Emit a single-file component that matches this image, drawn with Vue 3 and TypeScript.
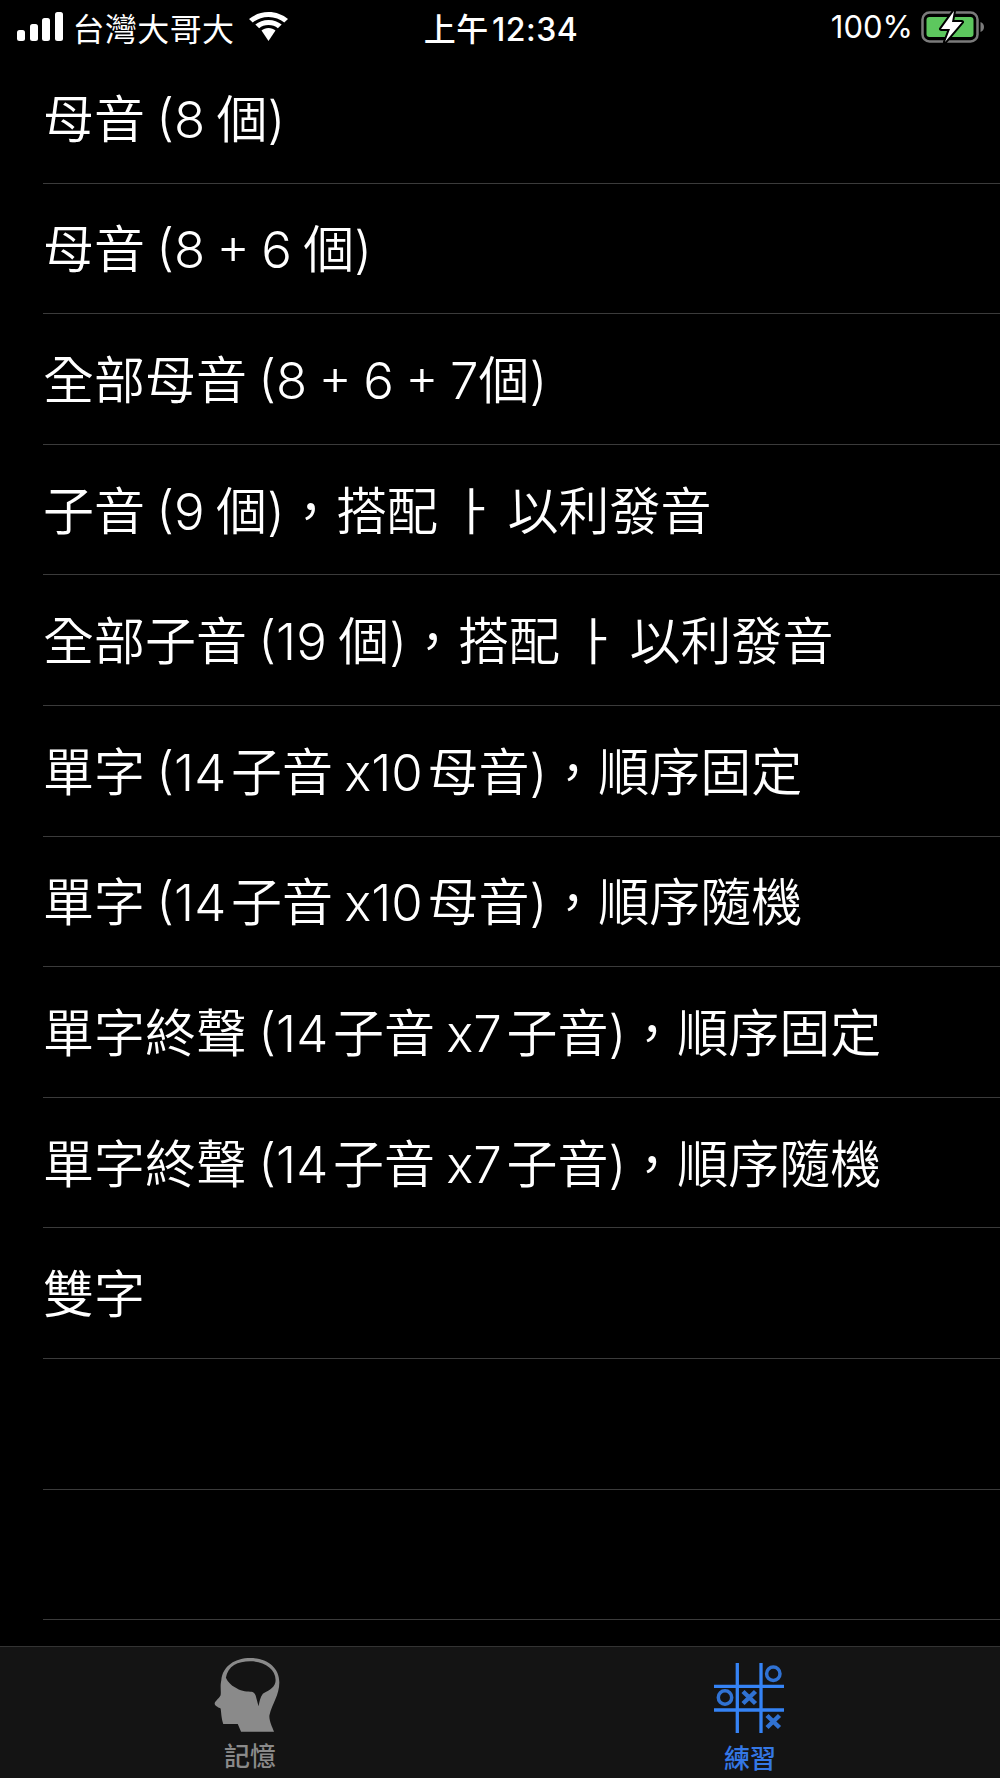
<template>
  <div class="screen">
    <header class="status">
      <div class="status-left">
        <span class="signal"><i></i><i></i><i></i><i></i></span>
        <span class="carrier">台灣大哥大</span>
        <svg class="wifi" viewBox="2.700 0.500 34.600 29" preserveAspectRatio="none" aria-hidden="true">
          <path d="M20 5.500c5.400 0 10.300 2.100 14 5.500l3.300-3.500C32.700 3.200 26.700.5 20 .5S7.300 3.200 2.700 7.500L6 11c3.700-3.400 8.600-5.500 14-5.500z" />
          <path d="M20 13.500c3.200 0 6.100 1.200 8.300 3.200l3.400-3.600C28.600 10.200 24.500 8.500 20 8.500s-8.600 1.700-11.700 4.600l3.400 3.600c2.200-2 5.100-3.200 8.300-3.200z" />
          <path d="M20 16.500c-2.400 0-4.600.9-6.200 2.400L20 29.500l6.200-10.600c-1.600-1.500-3.800-2.400-6.200-2.400z" />
        </svg>
      </div>
      <div class="status-time">上午&#x200A;12:34</div>
      <div class="status-right">
        <span class="percent">100%</span>
        <svg class="battery" viewBox="0 0 64 32" aria-hidden="true">
          <rect x="1.500" y="1.500" width="55" height="29" rx="7" fill="none" stroke="#7b7b7b" stroke-width="2.500" />
          <rect x="5.500" y="6" width="47" height="20" rx="3" fill="#5dc75e" />
          <path d="M59.500 11v10c2-.5 3.500-2.500 3.500-5s-1.500-4.500-3.500-5z" fill="#7b7b7b" />
          <path d="M33 0 20 18h9l-5 13 17-20H31z" fill="#fff" stroke="#000" stroke-width="4" stroke-linejoin="round" paint-order="stroke" />
        </svg>
      </div>
    </header>

    <main class="list">
      <div v-for="(row, i) in rows" :key="i" class="row">
        <span class="row-text">{{ row }}</span>
      </div>
    </main>

    <nav class="tabs">
      <div class="tab">
        <svg class="tab-icon head" viewBox="190 110 200 228" aria-hidden="true">
          <path fill-rule="evenodd" d="M300 112C350 112 388 140 388 185C388 225 366 250 358 285C356 300 366 320 372 335H272L262 312H218C212 295 212 275 210 265C205 262 192 258 192 250C192 244 205 235 210 225C212 210 208 200 212 180C216 135 255 112 300 112ZM300 122C262 122 232 136 226 172C232 186 244 196 252 200C270 212 285 214 300 214C312 214 316 222 318 232L325 258C328 244 330 230 338 220C350 212 372 205 376 185C382 150 345 122 300 122Z" />
        </svg>
        <span class="tab-label">記憶</span>
      </div>
      <div class="tab active">
        <svg class="tab-icon board" viewBox="0 0 70 70" aria-hidden="true">
          <path class="grid-lines" d="M23.300 0v70M47 0v70M0 23.300h70M0 47h70" />
          <circle cx="59.300" cy="10.700" r="6.700" class="mark" />
          <circle cx="11" cy="34.500" r="6.700" class="mark" />
          <path d="M29 28.500l12.500 12M41.500 28.500 29 40.500" class="mark cross" />
          <path d="M53 52.500l12.500 12M65.500 52.500 53 64.500" class="mark cross" />
        </svg>
        <span class="tab-label">練習</span>
      </div>
    </nav>
  </div>
</template>

<script setup lang="ts">
const HAIR = '\u200A'

const rows: string[] = [
  '母音 (8 個)',
  '母音 (8 + 6 個)',
  '全部母音 (8 + 6 + 7個)',
  '子音 (9 個)，搭配 ㅏ 以利發音',
  '全部子音 (19 個)，搭配 ㅏ 以利發音',
  `單字 (14${HAIR}子音 x10${HAIR}母音)，順序固定`,
  `單字 (14${HAIR}子音 x10${HAIR}母音)，順序隨機`,
  `單字終聲 (14${HAIR}子音 x7${HAIR}子音)，順序固定`,
  `單字終聲 (14${HAIR}子音 x7${HAIR}子音)，順序隨機`,
  '雙字',
  '',
  '',
]
</script>

<style>
html,
body {
  margin: 0;
  background: #000;
}
</style>

<style scoped>
.screen {
  width: 1000px;
  height: 1778px;
  display: flex;
  flex-direction: column;
  background: #000;
  color: #fff;
  font-family: Inter, "Noto Sans CJK TC", sans-serif;
  overflow: hidden;
}

/* status bar */
.status {
  height: 53px;
  flex-shrink: 0;
  display: grid;
  grid-template-columns: 1fr auto 1fr;
  align-items: center;
  font-size: 32px;
  padding: 0 15px 0 17px;
}
.status-left {
  display: flex;
  align-items: center;
}
.signal {
  display: flex;
  align-items: flex-end;
  gap: 4.500px;
  height: 29px;
  margin-right: 10px;
}
.signal i {
  width: 8px;
  background: #fff;
  border-radius: 2.500px;
}
.signal i:nth-child(1) { height: 11px; }
.signal i:nth-child(2) { height: 17px; }
.signal i:nth-child(3) { height: 23px; }
.signal i:nth-child(4) { height: 29px; }
.carrier {
  letter-spacing: 0.4px;
}
.wifi {
  width: 39px;
  height: 29px;
  fill: #fff;
  margin-left: 14px;
}
.status-time {
  font-weight: 500;
  letter-spacing: 0.5px;
}
.status-right {
  display: flex;
  align-items: center;
  justify-content: flex-end;
  font-size: 31px;
}
.battery {
  width: 64px;
  height: 32px;
  margin-left: 8px;
}

/* list */
.list {
  flex: 1;
  min-height: 0;
}
.row {
  height: 130.600px;
  box-sizing: border-box;
  margin-left: 43px;
  padding-bottom: 4px;
  border-bottom: 1.500px solid #3b3b3b;
  display: flex;
  align-items: center;
  font-size: 51px;
  font-weight: 350;
  word-spacing: -3px;
  white-space: pre;
}

/* tab bar */
.tabs {
  height: 132px;
  flex-shrink: 0;
  box-sizing: border-box;
  display: flex;
  background: #141414;
  border-top: 1px solid #333;
}
.tab {
  flex: 1;
  display: flex;
  flex-direction: column;
  align-items: center;
  padding-top: 10px;
  color: #8a8a8a;
}
.tab.active {
  color: #3478e6;
}
.tab-icon {
  display: block;
}
.head {
  width: 66px;
  height: 76px;
  fill: #8a8a8a;
  margin-right: 6px;
}
.board {
  width: 70px;
  height: 70px;
  margin-top: 6px;
  margin-right: 2px;
  fill: none;
  stroke: #3583f5;
}
.grid-lines {
  stroke-width: 3.300px;
}
.mark {
  stroke-width: 3.500px;
  stroke-opacity: 0.85;
}
.mark.cross {
  stroke-width: 4.500px;
}
.tab-label {
  font-size: 26px;
  font-weight: 500;
  line-height: 28px;
  margin-top: 10px;
}
.tab.active .tab-label {
  margin-top: 12px;
}
</style>
